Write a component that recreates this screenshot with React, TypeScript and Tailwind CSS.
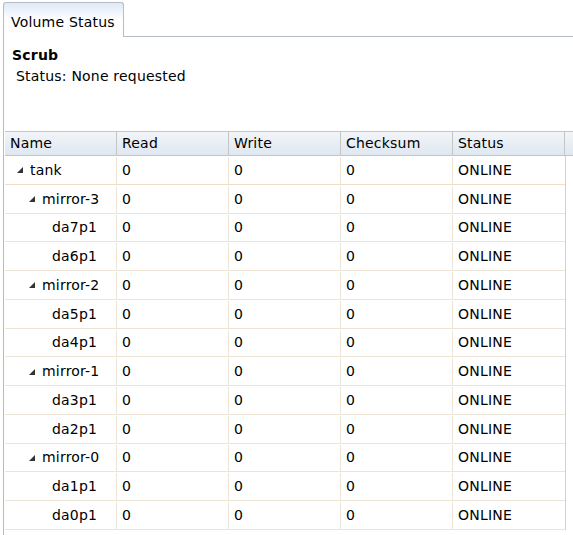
import React from 'react';

type Row = { name: string; level: number; expanded?: boolean };

const rows: Row[] = [
  { name: 'tank', level: 0, expanded: true },
  { name: 'mirror-3', level: 1, expanded: true },
  { name: 'da7p1', level: 2 },
  { name: 'da6p1', level: 2 },
  { name: 'mirror-2', level: 1, expanded: true },
  { name: 'da5p1', level: 2 },
  { name: 'da4p1', level: 2 },
  { name: 'mirror-1', level: 1, expanded: true },
  { name: 'da3p1', level: 2 },
  { name: 'da2p1', level: 2 },
  { name: 'mirror-0', level: 1, expanded: true },
  { name: 'da1p1', level: 2 },
  { name: 'da0p1', level: 2 },
];

function Arrow() {
  return (
    <svg width="6" height="6" viewBox="0 0 6 6" className="mr-[7px] shrink-0">
      <path d="M6 0 L6 6 L0 6 Z" fill="#333" />
    </svg>
  );
}

export default function App() {
  return (
    <div
      className="relative h-[535px] w-[573px] overflow-hidden bg-white text-[14px] tracking-[0.2px] text-black"
      style={{ fontFamily: '"DejaVu Sans", Verdana, sans-serif' }}
    >
      {/* tab strip */}
      <div className="flex h-[37px] items-end pl-[3px] pt-[2px]">
        <div className="flex h-[35px] w-[121px] items-center rounded-t-[3px] border border-b-0 border-[#b5bcc5] bg-gradient-to-b from-[#dfe8f6] via-white to-white pl-[7px] pt-[4px]">
          Volume Status
        </div>
        <div className="h-full flex-1 border-b border-[#b5bcc5]" />
      </div>

      <div className="ml-[3px] flex h-[498px] flex-col border-l border-[#b5bcc5] pl-[1px]">
        <div className="h-[94px] pl-[7px] pt-[8px]">
          <div className="font-bold leading-[20px]">Scrub</div>
          <div className="pl-[4px] leading-[22px]">Status: None requested</div>
        </div>

        <div className="flex flex-col">
          {/* header */}
          <div className="flex h-[25px] border-y border-[#c5c5c5] bg-gradient-to-b from-[#f2f5f9] to-[#dfe7f0]">
            {['Name', 'Read', 'Write', 'Checksum', 'Status'].map((h) => (
              <div
                key={h}
                className="flex w-[112px] items-center border-r border-[#c5c5c5] pl-[5px]"
              >
                {h}
              </div>
            ))}
            <div className="flex-1" />
          </div>

          {/* body */}
          <div className="w-[561px] border-r border-[#d8d0c6]">
            {rows.map((r, i) => (
              <div
                key={r.name}
                className={`flex h-[28.75px] border-b pt-[1px] ${
                  i === 0 ? 'border-[#f1dcc8]' : 'border-[#ede4d8]'
                }`}
              >
                <div
                  className="flex w-[112px] items-center border-r border-[#ede4d8]"
                  style={{ paddingLeft: 12 + r.level * 12 }}
                >
                  {r.expanded ? <Arrow /> : <span className="w-[11px]" />}
                  {r.name}
                </div>
                <div className="flex w-[112px] items-center border-r border-[#ede4d8] pl-[5px]">0</div>
                <div className="flex w-[112px] items-center border-r border-[#ede4d8] pl-[5px]">0</div>
                <div className="flex w-[112px] items-center border-r border-[#ede4d8] pl-[5px]">0</div>
                <div className="flex flex-1 items-center pl-[5px]">ONLINE</div>
              </div>
            ))}
          </div>
        </div>
      </div>
    </div>
  );
}
